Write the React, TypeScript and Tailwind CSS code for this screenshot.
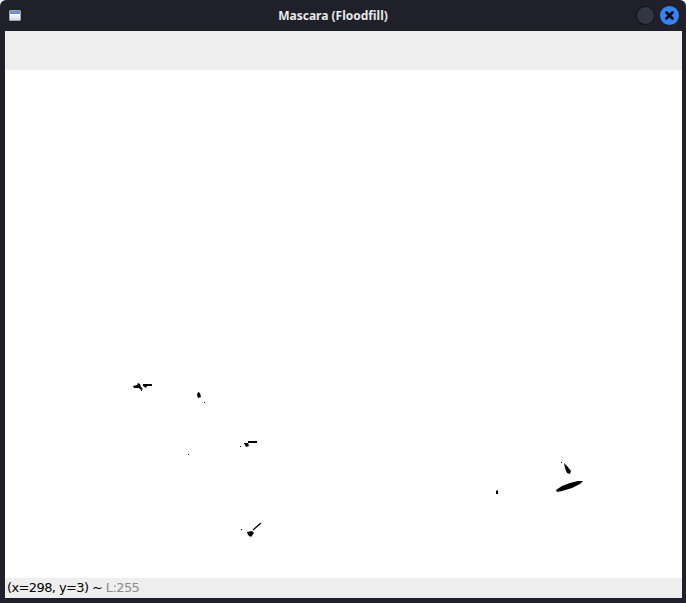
import React from "react"

function TitleBar() {
  return (
    <div className="relative h-[31px] flex items-center justify-center">
      <div className="absolute left-[9px] top-[10px] w-[12px] h-[11px] rounded-[1px] overflow-hidden flex flex-col border border-[#9aa3b5]">
        <div className="h-[3px] bg-[#6f93c9]" />
        <div className="flex-1 bg-gradient-to-b from-white to-[#d5d7dc]" />
      </div>
      <span className="text-[12px] font-bold text-[#e8e8ea] font-['Noto_Sans',sans-serif] pr-[20px]">
        Mascara (Floodfill)
      </span>
      <div className="absolute right-[31px] top-[6px] w-[19px] h-[19px] rounded-full bg-[#323544] border border-[#111218]" />
      <div className="absolute right-[7px] top-[6px] w-[19px] h-[19px] rounded-full bg-[#3584f4] flex items-center justify-center">
        <svg width="11" height="11" viewBox="0 0 11 11">
          <path d="M2.5 2.5 L8.5 8.5 M8.5 2.5 L2.5 8.5" stroke="#0b0d14" strokeWidth="2.8" strokeLinecap="round" />
        </svg>
      </div>
    </div>
  )
}

// the mask image: white background with a few black floodfill leftovers
function MaskImage() {
  // offsets of the image area inside the window
  const ox = 5
  const oy = 70
  const blobs: string[] = [
    "M133 386 L137 385 L138 383 L140 384 L141 387 L143 389 L141 390 L139 388 L134 388 Z",
    "M143 384 L152 384 L152 386 L147 386 L146 388 L143 386 Z",
    "M198 392 L200 393 L201 397 L198 398 L197 395 Z",
    "M244 443 L248 443 L249 446 L246 447 Z",
    "M248 441 L257 441 L257 443 L248 443 Z",
    "M247 532 L252 531 L254 533 L251 537 L248 535 Z",
    "M564 463 L567 466 L571 471 L570 474 L567 473 L565 468 Z",
    "M556 490 L562 486 L570 483 L578 481 L583 481 L580 484 L572 488 L562 491 L557 492 Z",
    "M496 491 L498 490 L498 494 L496 494 Z",
  ]
  const dots: [number, number][] = [
    [141, 390], [204, 402], [240, 446], [188, 454], [241, 529], [561, 462],
  ]
  return (
    <div className="flex-1 bg-white relative">
      <svg width="677" height="508" viewBox={`${ox} ${oy} 677 508`} className="absolute inset-0">
        {blobs.map((d, i) => (
          <path key={i} d={d} fill="#000" />
        ))}
        <path d="M253 530 L261 523" stroke="#000" strokeWidth="1.2" />
        {dots.map(([x, y], i) => (
          <rect key={i} x={x} y={y} width="1" height="1" fill="#000" />
        ))}
      </svg>
    </div>
  )
}

export default function App() {
  return (
    <div className="w-[686px] h-[603px] bg-[#1f2029] flex flex-col rounded-t-[6px] overflow-hidden">
      <TitleBar />
      <div className="flex-1 flex flex-col pl-[5px] pr-[4px] pb-[5px]">
        <div className="h-[39px] bg-[#eeeeee]" />
        <MaskImage />
        <div className="h-[20px] bg-[#eeeeee] flex items-center pl-[2px] text-[13px] font-['DejaVu_Sans',sans-serif] tracking-[-0.6px]">
          <span className="text-black">(x=298, y=3) ~&nbsp;</span>
          <span className="text-[#8c8c8c]">L:255</span>
        </div>
      </div>
    </div>
  )
}
